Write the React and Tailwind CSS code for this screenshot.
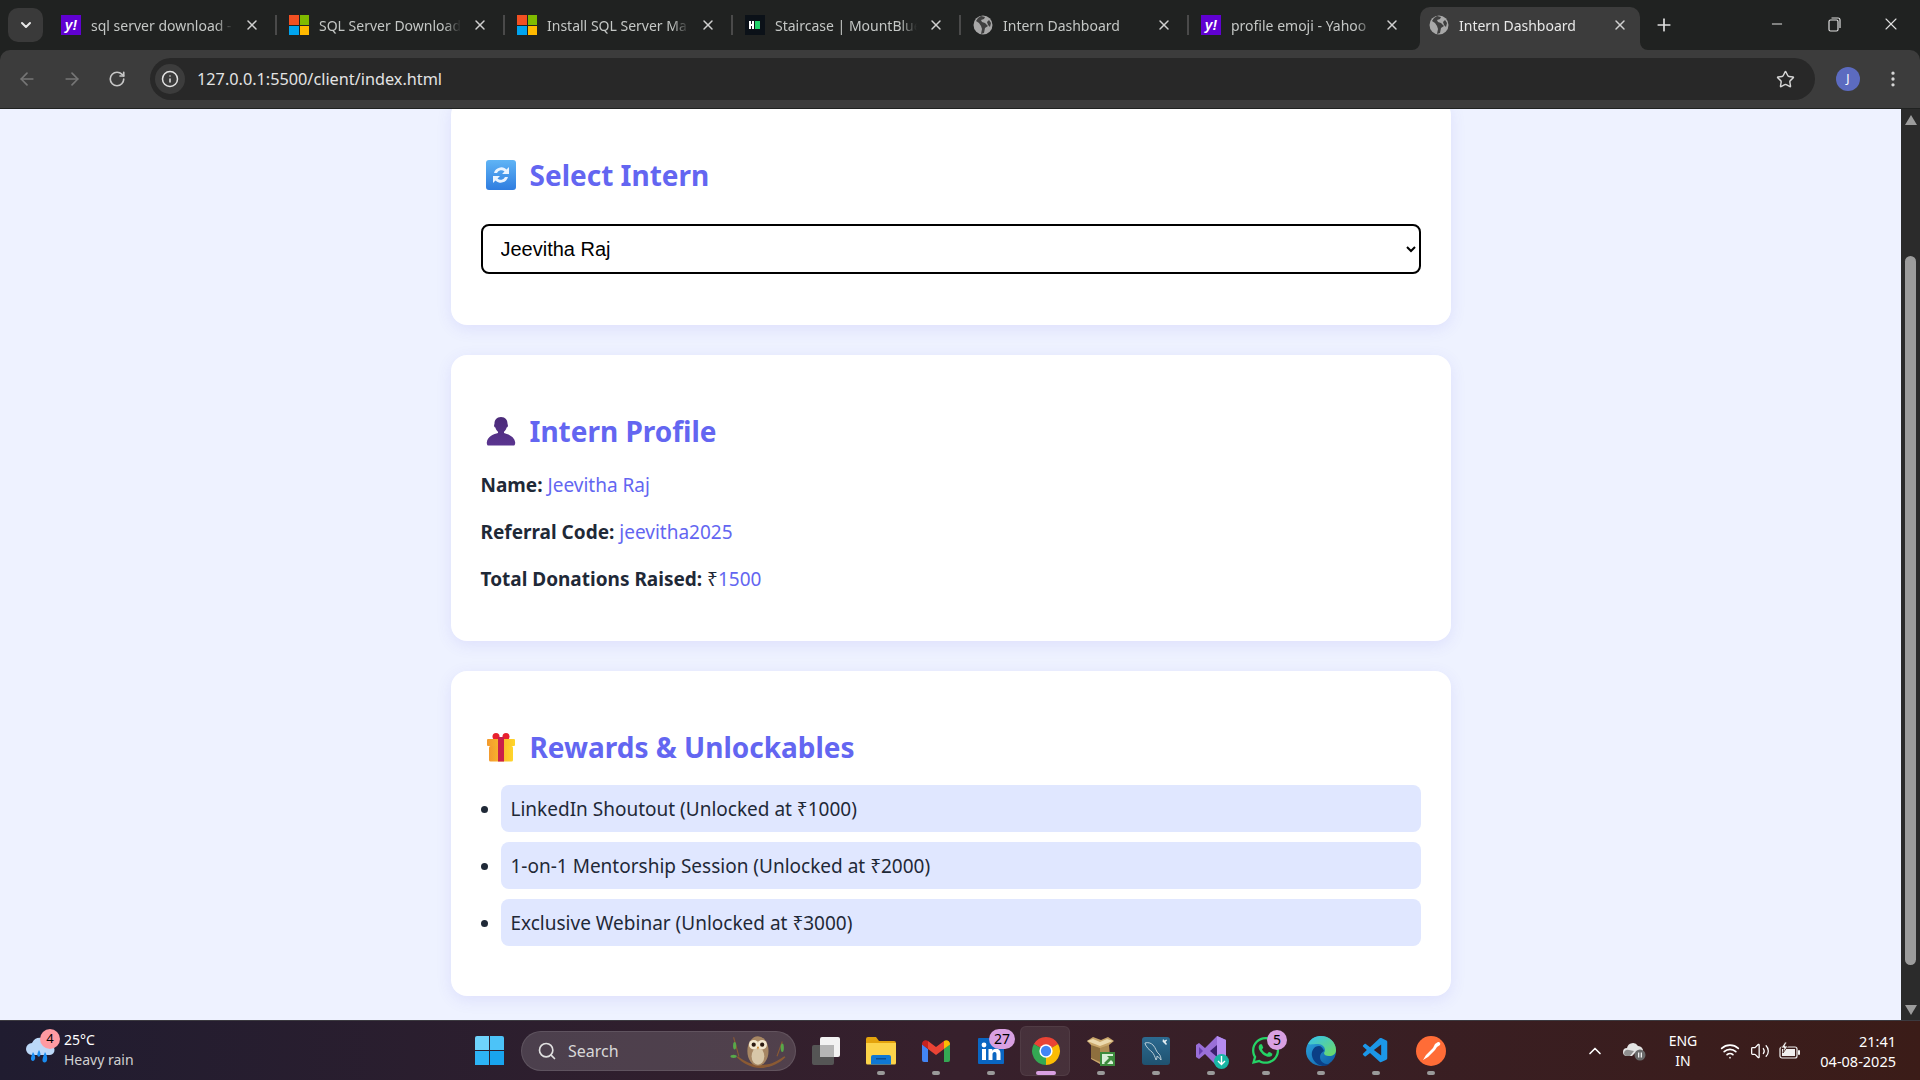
import React from 'react';
import {
  X, Plus, ChevronDown, ChevronUp, ArrowLeft, ArrowRight, RotateCw, Info, Star, Minus,
  EllipsisVertical, Search, Wifi, Volume2,
} from 'lucide-react';
import { FaWhatsapp } from 'react-icons/fa';
import { VscVscode } from 'react-icons/vsc';

// ---------- favicons ----------
const YahooIcon = () => (
  <div className="w-5 h-5 bg-[#6001d2] flex items-center justify-center text-white text-[14px] font-bold italic leading-none font-['Liberation_Sans',sans-serif]">
    y!
  </div>
);

const MsIcon = () => (
  <div className="w-5 h-5 grid grid-cols-2 grid-rows-2 gap-[1px]">
    <div className="bg-[#f25022]" />
    <div className="bg-[#7fba00]" />
    <div className="bg-[#00a4ef]" />
    <div className="bg-[#ffb900]" />
  </div>
);

const StairIcon = () => (
  <svg width="20" height="20" viewBox="0 0 20 20">
    <rect width="20" height="20" fill="#0b1118" />
    <path d="M4 6h2v3h1V6h2v8H7v-3H6v3H4z" fill="#fff" />
    <rect x="10" y="6" width="5" height="8" fill="#22d36b" />
  </svg>
);

const GlobeIcon = () => (
  <svg width="20" height="20" viewBox="0 0 20 20">
    <circle cx="10" cy="10" r="9.5" fill="#a8a8a8" />
    <path d="M8 1 5 3 3 6l3 2 2 3 1 3-1 5 3-1 1-5 3-2-3-3-3-1-1-2 3-1 1-2z" fill="#3f3f3f" />
    <path d="M16 5l2 3-1 4-2-2-1-3z" fill="#3f3f3f" />
  </svg>
);

const tabs = [
  { title: 'sql server download -', icon: <YahooIcon /> },
  { title: 'SQL Server Download', icon: <MsIcon /> },
  { title: 'Install SQL Server Ma', icon: <MsIcon /> },
  { title: 'Staircase | MountBlue', icon: <StairIcon /> },
  { title: 'Intern Dashboard', icon: <GlobeIcon /> },
  { title: 'profile emoji - Yahoo', icon: <YahooIcon /> },
  { title: 'Intern Dashboard', icon: <GlobeIcon />, active: true },
];

const Tab = ({ title, icon, active, hideSep }) => (
  <div className="relative w-[228px] h-[43px] shrink-0">
    {active && (
      <>
        <div className="absolute left-1 right-1 top-0 bottom-0 bg-[#3c3c3c] rounded-t-[10px]" />
        <svg className="absolute left-[-4px] bottom-0" width="8" height="8" viewBox="0 0 8 8">
          <path d="M8 0v8H0a8 8 0 0 0 8-8z" fill="#3c3c3c" />
        </svg>
        <svg className="absolute right-[-4px] bottom-0" width="8" height="8" viewBox="0 0 8 8">
          <path d="M0 0v8h8a8 8 0 0 1-8-8z" fill="#3c3c3c" />
        </svg>
      </>
    )}
    <div className="relative flex items-center h-[36px] pl-[13px]">
      <div className="w-5 shrink-0">{icon}</div>
      <div
        className={`ml-[10px] w-[142px] overflow-hidden whitespace-nowrap text-[14px] [mask-image:linear-gradient(to_right,black_88%,transparent)] ${
          active ? 'text-[#e8e8e8]' : 'text-[#c4c7c5]'
        }`}
      >
        {title}
      </div>
      <X size={16} strokeWidth={2.2} className="ml-[11px] text-[#d0d0d0]" />
    </div>
    {!hideSep && <div className="absolute right-[-1px] top-[8px] h-5 w-[2px] bg-[#4a4a4a]" />}
  </div>
);

// ---------- heading emojis ----------
const RefreshEmoji = () => (
  <svg width="30" height="30" viewBox="0 0 30 30">
    <defs>
      <linearGradient id="rb" x1="0" y1="0" x2="0" y2="1">
        <stop offset="0" stopColor="#5fb4f5" />
        <stop offset="1" stopColor="#2f7de0" />
      </linearGradient>
    </defs>
    <rect width="30" height="30" rx="3" fill="url(#rb)" />
    <path d="M8 13a7.5 7.5 0 0 1 12.5-3.5L23 7v7h-7l2.5-2.5A4.6 4.6 0 0 0 11 13z" fill="#eaf4ff" />
    <path d="M22 17a7.5 7.5 0 0 1-12.5 3.5L7 23v-7h7l-2.5 2.5A4.6 4.6 0 0 0 19 17z" fill="#eaf4ff" />
  </svg>
);

const BustEmoji = () => (
  <svg width="30" height="30" viewBox="0 0 30 30">
    <defs>
      <linearGradient id="bs" x1="0" y1="0" x2="0" y2="1">
        <stop offset="0" stopColor="#4a2a78" />
        <stop offset="1" stopColor="#5a3590" />
      </linearGradient>
    </defs>
    <path d="M15 1c4.5 0 6.500 3 6.500 6.500 0 1 .6 1.400.4 2.500-.2 1-.8 1.400-1.300 1.600-.5 2-1.500 3.400-2.600 4.100v1.300c4 1.300 10.500 3 11.200 9.500.1.800-.3 3-1.200 3H2c-.9 0-1.300-2.200-1.200-3 .7-6.500 7.200-8.200 11.200-9.500v-1.300c-1.100-.7-2.100-2.100-2.600-4.100-.5-.2-1.100-.6-1.300-1.600-.2-1.100.4-1.500.4-2.500C8.500 4 10.500 1 15 1z" fill="url(#bs)" />
  </svg>
);

const GiftEmoji = () => (
  <svg width="30" height="30" viewBox="0 0 30 30">
    <defs>
      <linearGradient id="gb" x1="0" y1="0" x2="1" y2="0">
        <stop offset="0" stopColor="#f39a2e" />
        <stop offset="1" stopColor="#ffd62a" />
      </linearGradient>
    </defs>
    <circle cx="10" cy="4.500" r="3.500" fill="#e8212e" />
    <circle cx="20" cy="4.500" r="3.500" fill="#e8212e" />
    <rect x="1" y="7" width="28" height="7" rx="1" fill="url(#gb)" />
    <rect x="3" y="14" width="24" height="15.500" rx="1.500" fill="url(#gb)" />
    <rect x="12" y="5" width="6" height="24.500" fill="#c9204a" />
  </svg>
);

// ---------- page cards ----------
const Card = ({ icon, title, children, className }) => (
  <section className={`w-[1000px] bg-white rounded-2xl shadow-[0_4px_16px_rgba(79,70,229,0.1)] px-[30px] pt-[60px] ${className}`}>
    <h2 className="flex items-center h-8 pl-[5px] text-[28px] font-bold leading-8 text-[#6366f1]">
      <span className="w-[30px] mr-[14px]">{icon}</span>
      {title}
    </h2>
    {children}
  </section>
);

const Row = ({ label, children }) => (
  <p className="h-[29px] leading-[29px] text-[19px] text-[#1f2937]">
    <strong className="font-bold">{label}</strong> {children}
  </p>
);

const Scrollbar = () => (
  <div className="w-[19px] shrink-0 bg-[#2b2b2b] flex flex-col items-center">
    <div className="mt-[6px] w-0 h-0 border-x-[6px] border-x-transparent border-b-[10px] border-b-[#9c9c9c]" />
    <div className="mt-[131px] w-[11px] h-[709px] bg-[#9c9c9c] rounded-t-[6px] rounded-b-[6px]" />
    <div className="mt-auto mb-[5px] w-0 h-0 border-x-[6px] border-x-transparent border-t-[10px] border-t-[#9c9c9c]" />
  </div>
);

// ---------- taskbar icons ----------
const TaskViewIcon = () => (
  <svg width="30" height="30" viewBox="0 0 30 30">
    <rect x="1" y="9" width="22" height="20" rx="2" fill="#555" />
    <rect x="9" y="1" width="20" height="20" rx="2" fill="#f2f2f2" />
    <rect x="9" y="9" width="14" height="12" fill="#b5b5b5" />
  </svg>
);

const FolderIcon = () => (
  <svg width="30" height="28" viewBox="0 0 30 28">
    <path d="M0 2a2 2 0 0 1 2-2h8l3 4h15a2 2 0 0 1 2 2v3H0z" fill="#e4a30d" />
    <path d="M0 6h30v20a1.500 1.500 0 0 1-1.500 1.500h-27A1.500 1.500 0 0 1 0 26z" fill="#fcd34a" />
    <path d="M5 20a2 2 0 0 1 2-2h16a2 2 0 0 1 2 2v7.500H5z" fill="#0f78d4" />
    <rect x="10" y="21" width="10" height="1.500" fill="#0a4f94" />
  </svg>
);

const GmailIcon = () => (
  <svg width="28" height="22" viewBox="0 0 28 22">
    <path d="M0 4v16a2 2 0 0 0 2 2h4V9z" fill="#4285f4" />
    <path d="M28 4v16a2 2 0 0 1-2 2h-4V9z" fill="#34a853" />
    <path d="M6 9 14 15l8-6V1l-8 6-8-6z" fill="#ea4335" />
    <path d="M0 4c0-3 3.500-5 6-3v8L0 4.500z" fill="#c5221f" />
    <path d="M28 4c0-3-3.500-5-6-3v8l6-4.500z" fill="#fbbc04" />
  </svg>
);

const LinkedinIcon = () => (
  <div className="w-[26px] h-[26px] bg-[#0a66c2] rounded-[1px] relative overflow-hidden">
    <svg width="26" height="26" viewBox="0 0 26 26">
      <circle cx="6" cy="7" r="2.400" fill="#fff" />
      <rect x="4" y="11" width="4" height="11" fill="#fff" />
      <path d="M10.500 11h3.800v1.700c.7-1.200 2-2 3.700-2 3 0 4.500 1.800 4.500 5V22h-4v-5.500c0-1.700-.6-2.500-1.900-2.500-1.400 0-2.100 1-2.100 2.500V22h-4z" fill="#fff" />
    </svg>
  </div>
);

const ChromeIcon = () => (
  <svg width="30" height="30" viewBox="0 0 28 28">
    <path d="M14 14 2.740 7.500A13 13 0 0 1 25.260 7.500z" fill="#ea4335" />
    <path d="M14 14 25.260 7.500A13 13 0 0 1 14 27z" fill="#fbbc04" />
    <path d="M14 14 14 27A13 13 0 0 1 2.740 7.500z" fill="#34a853" />
    <circle cx="14" cy="14" r="6.200" fill="#fff" />
    <circle cx="14" cy="14" r="4.800" fill="#4285f4" />
  </svg>
);

const PackageIcon = () => (
  <svg width="30" height="30" viewBox="0 0 30 30">
    <path d="M1 5 7 1l8 3 7-3 6 4-5 4 1 14-10 5-9-5V9z" fill="#c9a66b" />
    <path d="M5 9 14 12v14L5 22z" fill="#8e6f3e" />
    <path d="M14 12 23 9v8l-9 9z" fill="#b08d55" />
    <path d="M1 5l13 5 13-5-6-2-7 3-7-3z" fill="#ecd9ae" />
    <rect x="14" y="16" width="15" height="14" fill="#3d8b3d" />
    <rect x="16" y="18" width="11" height="10" fill="#d8efd8" />
    <path d="M18 27l5-5-2-2h6v6l-2-2-5 5z" fill="#3d8b3d" />
  </svg>
);

const MysqlIcon = () => (
  <svg width="28" height="28" viewBox="0 0 28 28">
    <defs>
      <linearGradient id="ms" x1="0" y1="0" x2="0" y2="1">
        <stop offset="0" stopColor="#2c6a90" />
        <stop offset="1" stopColor="#1f5270" />
      </linearGradient>
    </defs>
    <rect width="28" height="28" rx="3" fill="url(#ms)" />
    <path d="M3 6c3-1 6 0 8 2 3 3 3 7 6 9 1 1 2 3 2 6-1-2-3-3-4-4 0 1 0 3-1 4-1-3-2-6-4-8-2-2-4-3-5-5-1-1-2-3-2-4z" fill="none" stroke="#c8d8e0" strokeWidth="0.900" />
    <path d="M21 2l1.500 1.500 2-1 .5 1-1.500 1.500 1.500 2-1 1-2-2-1.500-1.500z" fill="#e4edf2" />
  </svg>
);

const VsIcon = () => (
  <div className="relative w-[30px] h-[30px]">
    <svg width="30" height="30" viewBox="0 0 30 30">
      <path d="M21 0l9 4v22l-9 4-12-12-6 5-3-2V9l3-2 6 5z" fill="#9a6fd8" />
      <path d="M21 0l9 4v22l-9 4z" fill="#b58cf0" />
      <path d="M3 11v8l4-4z" fill="#6a3fb0" />
      <path d="M21 9l-7 6 7 6z" fill="#3b1f6e" />
    </svg>
    <div className="absolute right-[-3px] bottom-[-3px] w-[15px] h-[15px] rounded-full bg-[#18b6a4] flex items-center justify-center">
      <svg width="9" height="10" viewBox="0 0 9 10">
        <path d="M4.500 0v8M1 5l3.500 3.500L8 5" stroke="#fff" strokeWidth="1.400" fill="none" />
      </svg>
    </div>
  </div>
);

const EdgeIcon = () => (
  <svg width="30" height="30" viewBox="0 0 30 30">
    <defs>
      <linearGradient id="eg" x1="0" y1="0" x2="1" y2="1">
        <stop offset="0" stopColor="#2ea8e0" />
        <stop offset="1" stopColor="#0c59a4" />
      </linearGradient>
      <linearGradient id="eg2" x1="0" y1="0" x2="1" y2="1">
        <stop offset="0" stopColor="#35c1f1" />
        <stop offset="1" stopColor="#6fdc5e" />
      </linearGradient>
    </defs>
    <circle cx="15" cy="15" r="15" fill="url(#eg)" />
    <path d="M2 8C5 2 10 0 15 0c8 0 15 6 15 14 0 4-3 6-7 6-3 0-5-1-5-3 0-1 1-1 1-3 0-3-3-6-7-6-5 0-8 1-10 0z" fill="url(#eg2)" />
    <path d="M13 10c-5 0-8 5-7 10 1 5 5 9 11 10 3 0 5-1 7-2-5 1-10-2-10-7 0-3 2-5 4-6-1-3-3-5-5-5z" fill="#0b3f86" />
  </svg>
);

const PostmanIcon = () => (
  <svg width="30" height="30" viewBox="0 0 30 30">
    <circle cx="15" cy="15" r="15" fill="#ff6c37" />
    <path d="M22 6a2 2 0 0 1 2 3l-3 2-2 3-7 7-5 3 3-5 7-7 2-4z" fill="#fff" />
  </svg>
);

const Badge = ({ children, className }) => (
  <div className={`absolute flex items-center justify-center rounded-full bg-[#d9a0e2] text-black text-[14px] leading-none ${className}`}>
    {children}
  </div>
);

const apps = [
  { icon: <TaskViewIcon />, noDot: true },
  { icon: <FolderIcon /> },
  { icon: <GmailIcon /> },
  { icon: <LinkedinIcon />, badge: '27', badgeClass: 'left-[26px] top-[8px] w-[26px] h-[20px]' },
  { icon: <ChromeIcon />, active: true },
  { icon: <PackageIcon /> },
  { icon: <MysqlIcon /> },
  { icon: <VsIcon /> },
  { icon: <FaWhatsapp size={31} className="text-[#25d366]" />, badge: '5', badgeClass: 'left-[29px] top-[9px] w-5 h-5' },
  { icon: <EdgeIcon /> },
  { icon: <VscVscode size={30} className="text-[#1c97e8]" /> },
  { icon: <PostmanIcon /> },
];

const TaskApp = ({ icon, active, noDot, badge, badgeClass }) => (
  <div className="relative w-[55px] h-[60px] flex items-center justify-center shrink-0">
    {active && <div className="absolute left-[2px] right-[3px] top-[5px] bottom-[5px] rounded-md bg-white/8 border border-white/5" />}
    <div className="relative">{icon}</div>
    {badge && <Badge className={badgeClass}>{badge}</Badge>}
    {!noDot && (
      <div className={`absolute bottom-[6px] left-1/2 -translate-x-1/2 h-1 rounded-full ${active ? 'w-5 bg-[#d9a0e2]' : 'w-2 bg-[#9a9a9a]'}`} />
    )}
  </div>
);

const WeatherIcon = () => (
  <svg width="32" height="28" viewBox="0 0 32 28">
    <path d="M8 18a6 6 0 0 1 0-12 9 9 0 0 1 17 2 5 5 0 0 1 1 10z" fill="#bcd8f8" />
    <path d="M9 15c2 3 3 6 1.500 8-1.500 2-4 .5-3.500-2 .3-2 1-4 2-6z" fill="#1a8cf0" />
    <path d="M21 15c2 3 3 7 1.500 9.500-1.500 2-4.500 1-4-2 .3-2.500 1.500-5 2.500-7.500z" fill="#1a8cf0" />
    <path d="M15 13c1.500 2.500 2 4.500 1 6-1 1.300-3 .5-2.700-1.500.2-1.500.8-3 1.700-4.500z" fill="#1a8cf0" />
  </svg>
);

const OwlIcon = () => (
  <svg width="60" height="36" viewBox="0 0 56 34">
    <path d="M8 22c8 6 16 9 24 8 8 0 14-4 20-8l1 1c-6 6-13 9-21 10-9 1-18-3-25-10z" fill="#8b5a33" />
    <path d="M4 4l5 18M50 8l-5 14" stroke="#8b5a33" strokeWidth="1" />
    <ellipse cx="5" cy="12" rx="1.500" ry="3.500" fill="#58a84a" />
    <ellipse cx="50" cy="14" rx="1.500" ry="4" fill="#58a84a" />
    <ellipse cx="4" cy="22" rx="3" ry="1.500" fill="#58a84a" />
    <ellipse cx="27" cy="17" rx="10" ry="14" fill="#a68663" />
    <ellipse cx="27" cy="22" rx="6" ry="8" fill="#d8c7a8" />
    <circle cx="23" cy="11" r="4.500" fill="#f3e8cf" />
    <circle cx="31" cy="11" r="4.500" fill="#f3e8cf" />
    <circle cx="23" cy="11" r="2" fill="#2b1a10" />
    <circle cx="31" cy="11" r="2" fill="#2b1a10" />
    <path d="M26 13h2l-1 3z" fill="#d18a2f" />
  </svg>
);

const CloudPausedIcon = () => (
  <svg width="24" height="20" viewBox="0 0 24 20">
    <path d="M4 15a4 4 0 0 1 0-8 6 6 0 0 1 11-2 5 5 0 0 1 5 6v1H12l-3 3z" fill="#e4e4e4" />
    <path d="M1 12a3.500 3.500 0 0 1 5-3l5 1-4 5H4c-2 0-3-1-3-3z" fill="#8f8f8f" />
    <circle cx="17" cy="14" r="5.500" fill="#6a6a6a" />
    <rect x="15" y="11.500" width="1.300" height="5" fill="#eee" />
    <rect x="17.700" y="11.500" width="1.300" height="5" fill="#eee" />
  </svg>
);

const BatteryIcon = () => (
  <svg width="22" height="18" viewBox="0 0 22 18">
    <rect x="1" y="5" width="17" height="11" rx="2" stroke="#f0f0f0" strokeWidth="1.200" fill="none" />
    <rect x="3" y="7" width="13" height="7" fill="#f0f0f0" />
    <rect x="19" y="8" width="2" height="5" rx="1" fill="#f0f0f0" />
    <path d="M6 0 2 6h3l-1 5 5-7H6l2-4z" fill="#f0f0f0" stroke="#3b1c18" strokeWidth="0.800" />
  </svg>
);

const App = () => {
  return (
    <div className="h-screen w-full flex flex-col overflow-hidden bg-[#eef2ff] font-['Noto_Sans','Open_Sans',sans-serif]">
      {/* Tab strip */}
      <div className="h-[50px] shrink-0 bg-[#202221] flex items-start relative">
        <div className="ml-2 mt-2 w-[35px] h-[34px] rounded-[10px] bg-[#3a3a3a] flex items-center justify-center shrink-0">
          <ChevronDown size={16} strokeWidth={3} className="text-[#e8e8e8]" />
        </div>
        <div className="ml-[5px] mt-[7px] flex">
          {tabs.map((t, i) => (
            <Tab key={i} {...t} hideSep={t.active || i === 5} />
          ))}
        </div>
        <Plus size={20} strokeWidth={2} className="ml-[10px] mt-[15px] text-[#e0e0e0]" />
        <div className="ml-auto flex items-center h-[34px] mt-[7px] pr-[19px] text-[#e0e0e0]">
          <Minus size={16} strokeWidth={1.5} />
          <svg className="ml-[41px]" width="16" height="16" viewBox="0 0 16 16" fill="none" stroke="currentColor" strokeWidth="1.200">
            <rect x="3" y="4" width="9" height="11" rx="1.500" />
            <path d="M5.500 2H12a2 2 0 0 1 2 2v8" />
          </svg>
          <X size={20} strokeWidth={1.3} className="ml-[39px]" />
        </div>
      </div>

      {/* Toolbar */}
      <div className="h-[59px] shrink-0 bg-[#202221]">
        <div className="h-[58px] bg-[#3c3c3c] rounded-t-[10px] flex items-center">
          <ArrowLeft size={20} className="ml-[17px] text-[#767676]" />
          <ArrowRight size={20} className="ml-[25px] text-[#767676]" />
          <RotateCw size={18} strokeWidth={2.2} className="ml-[26px] text-[#c7c7c7]" />
          <div className="ml-[24px] w-[1665px] h-[42px] rounded-full bg-[#282828] flex items-center">
            <div className="ml-[5px] w-[30px] h-[30px] rounded-full bg-[#3c3c3c] flex items-center justify-center">
              <Info size={18} className="text-[#e3e3e3]" />
            </div>
            <span className="ml-[12px] mt-[1px] text-[16.25px] text-[#e3e3e3]">127.0.0.1:5500/client/index.html</span>
            <Star size={19} strokeWidth={1.8} className="ml-auto mr-[20px] text-[#d6d6d6]" />
          </div>
          <div className="ml-[21px] w-6 h-6 rounded-full bg-[#5c6bc0] flex items-center justify-center text-white text-[12px]">J</div>
          <EllipsisVertical size={20} className="ml-[23px] text-[#d6d6d6]" />
        </div>
      </div>

      {/* Page */}
      <div className="flex-1 flex min-h-0">
        <main className="flex-1 min-w-0 overflow-hidden flex flex-col items-center gap-[30px]">
          <Card icon={<RefreshEmoji />} title="Select Intern" className="-mt-[10px] pb-[51px] shrink-0">
            <select className="mt-[33px] block w-full h-[50px] border-2 border-black rounded-lg pl-[14px] text-[20px] text-black bg-white font-['Liberation_Sans',sans-serif]">
              <option>Jeevitha Raj</option>
            </select>
          </Card>

          <Card icon={<BustEmoji />} title="Intern Profile" className="pb-[47px] shrink-0">
            <div className="mt-6 flex flex-col gap-[18px]">
              <Row label="Name:"><span className="text-[#6366f1]">Jeevitha Raj</span></Row>
              <Row label="Referral Code:"><span className="text-[#6366f1]">jeevitha2025</span></Row>
              <Row label="Total Donations Raised:">₹<span className="text-[#6366f1]">1500</span></Row>
            </div>
          </Card>

          <Card icon={<GiftEmoji />} title="Rewards & Unlockables" className="pb-[50px] shrink-0">
            <ul className="mt-[22px] list-disc pl-5 flex flex-col gap-[10px] text-[19px] text-[#1f2937]">
              <li className="h-[47px] leading-[48px] pl-[10px] bg-[#e0e7ff] rounded-lg">LinkedIn Shoutout (Unlocked at ₹1000)</li>
              <li className="h-[47px] leading-[48px] pl-[10px] bg-[#e0e7ff] rounded-lg">1-on-1 Mentorship Session (Unlocked at ₹2000)</li>
              <li className="h-[47px] leading-[48px] pl-[10px] bg-[#e0e7ff] rounded-lg">Exclusive Webinar (Unlocked at ₹3000)</li>
            </ul>
          </Card>
        </main>
        <Scrollbar />
      </div>

      {/* Windows taskbar */}
      <footer className="h-[60px] shrink-0 border-t border-[#3c3a40] bg-linear-to-r from-[#201c30] via-[#37202c] to-[#3b1c18] flex items-center">
        <div className="w-[475px] shrink-0 pl-[24px] flex items-center">
          <div className="relative">
            <WeatherIcon />
            <div className="absolute right-[-4px] top-[-8px] w-5 h-5 rounded-full bg-[#ff9aa2] flex items-center justify-center text-black text-[13px] leading-none">4</div>
          </div>
          <div className="ml-[8px] -mt-[2px] text-[14px] leading-[20px]">
            <div className="text-white">25°C</div>
            <div className="text-[#d0d0d0]">Heavy rain</div>
          </div>
        </div>
        <div className="w-[29px] h-[29px] grid grid-cols-2 grid-rows-2 gap-[1px] shrink-0">
          <div className="bg-[#6fd3fb] rounded-tl-[2px]" />
          <div className="bg-[#4cc3f8] rounded-tr-[2px]" />
          <div className="bg-[#2db4f6]" />
          <div className="bg-[#19a4ee]" />
        </div>
        <div className="ml-[17px] w-[275px] h-10 rounded-full bg-white/15 border border-white/10 flex items-center shrink-0">
          <Search size={20} className="ml-[15px] text-[#e0e0e0]" />
          <span className="ml-[11px] text-[16px] text-[#d8d8d8]">Search</span>
          <div className="ml-auto mr-[6px]"><OwlIcon /></div>
        </div>
        <div className="ml-[2px] flex">
          {apps.map((a, i) => (
            <TaskApp key={i} {...a} />
          ))}
        </div>
        <div className="ml-auto pr-[24px] flex items-center text-white">
          <div className="w-6 flex justify-center"><ChevronUp size={20} /></div>
          <div className="ml-4 w-6 flex justify-center"><CloudPausedIcon /></div>
          <div className="ml-4 w-10 text-center text-[14px] leading-[20px]">
            <div>ENG</div>
            <div>IN</div>
          </div>
          <div className="ml-[15px] w-6 flex justify-center"><Wifi size={20} /></div>
          <div className="ml-[6px] w-6 flex justify-center"><Volume2 size={20} strokeWidth={1.5} /></div>
          <div className="ml-[6px] w-6 flex justify-center"><BatteryIcon /></div>
          <div className="ml-[13px] w-[81px] text-right text-[14.5px] leading-[20px]">
            <div>21:41</div>
            <div>04-08-2025</div>
          </div>
        </div>
      </footer>
    </div>
  );
};

export default App;
